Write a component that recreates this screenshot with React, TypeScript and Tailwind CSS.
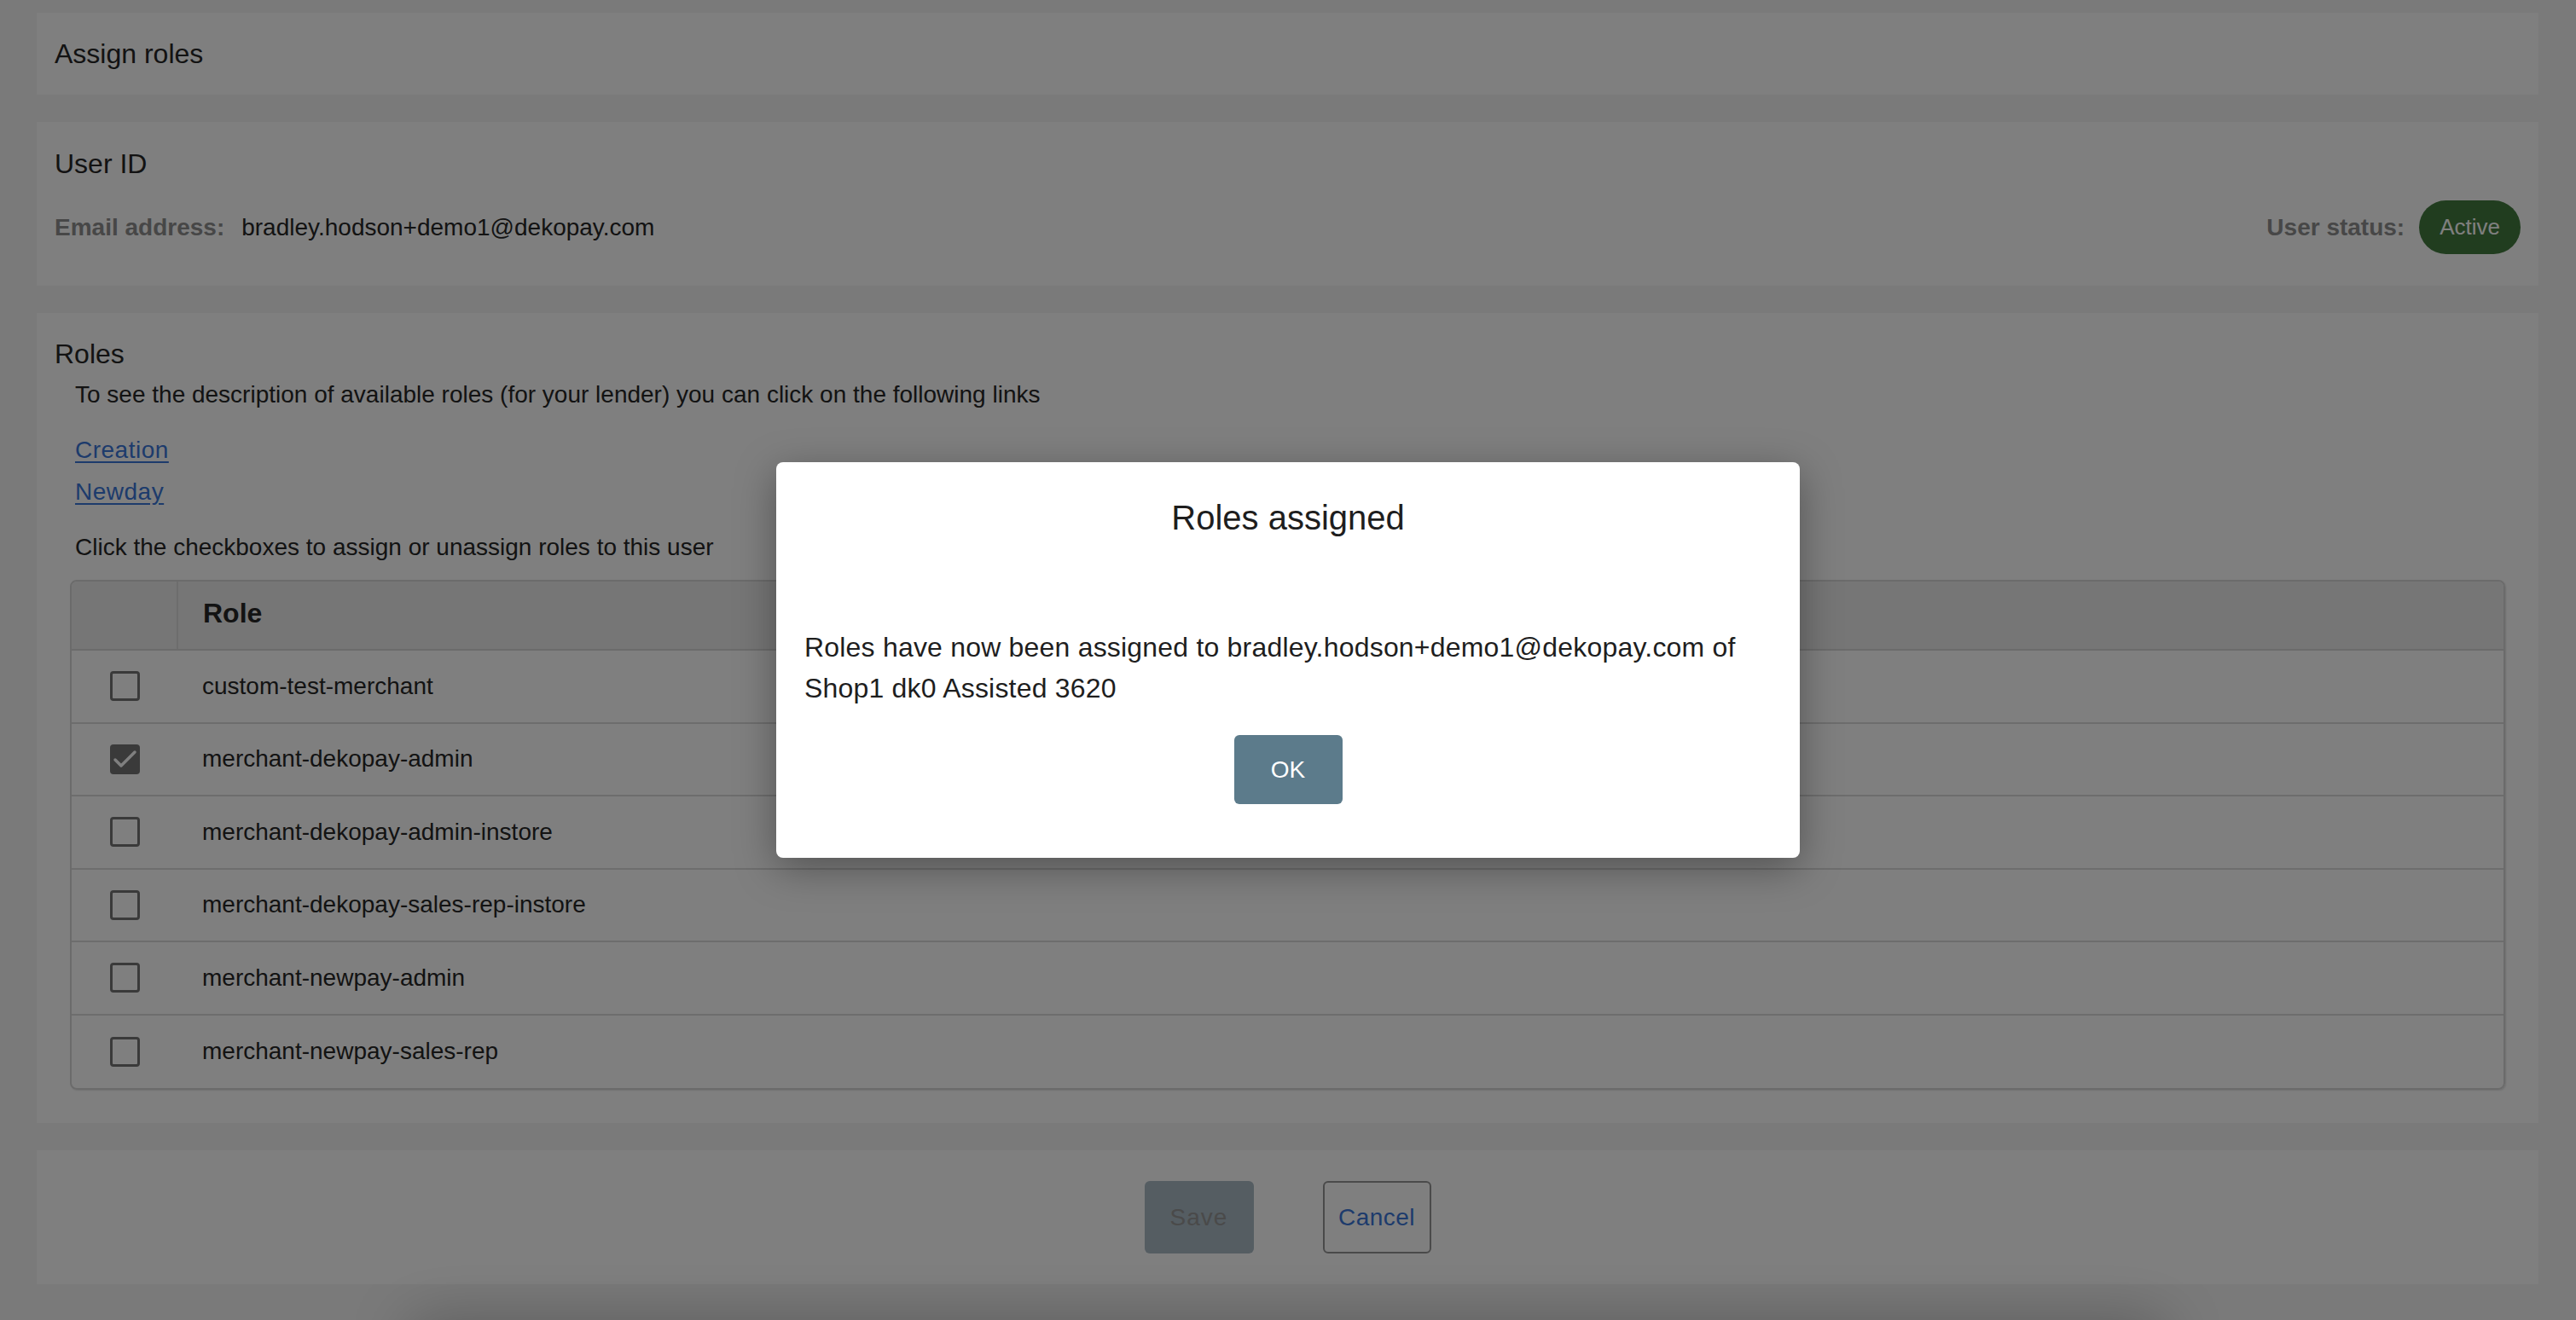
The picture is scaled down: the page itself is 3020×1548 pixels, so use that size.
import React from "react";

const roles = [
  { name: "custom-test-merchant", checked: false },
  { name: "merchant-dekopay-admin", checked: true },
  { name: "merchant-dekopay-admin-instore", checked: false },
  { name: "merchant-dekopay-sales-rep-instore", checked: false },
  { name: "merchant-newpay-admin", checked: false },
  { name: "merchant-newpay-sales-rep", checked: false },
];

function Checkbox({ checked }: { checked: boolean }) {
  if (checked) {
    return (
      <div className="w-[35px] h-[35px] rounded-[4px] bg-[#747474] flex items-center justify-center">
        <svg width="35" height="35" viewBox="0 0 35 35">
          <polyline points="6,18 13,25 29,9" fill="none" stroke="#ffffff" strokeWidth="3.5" strokeLinecap="round" strokeLinejoin="round" />
        </svg>
      </div>
    );
  }
  return <div className="w-[35px] h-[35px] rounded-[4px] border-[3px] border-[#747474] bg-white" />;
}

export default function App() {
  return (
    <div className="relative w-[3020px] h-[1548px] overflow-hidden bg-[#f4f4f4] font-['Liberation_Sans',Arial,sans-serif] text-[#262626]">
      <div className="flex flex-col gap-[32px] pt-[15px] pl-[43px] pr-[44px]">
        {/* Card 1 */}
        <div className="bg-white h-[96px] flex items-center px-[21px] text-[32px] leading-[38px]">
          Assign roles
        </div>

        {/* Card 2 */}
        <div className="bg-white pt-[30px] pb-[37px] px-[21px]">
          <div className="text-[32px] leading-[38px]">User ID</div>
          <div className="mt-[24px] flex items-center justify-between h-[63px]">
            <div className="flex items-center text-[28px]">
              <span className="font-bold text-[#8e8e8e]">Email address:</span>
              <span className="ml-[20px]">bradley.hodson+demo1@dekopay.com</span>
            </div>
            <div className="flex items-center">
              <span className="font-bold text-[28px] text-[#8e8e8e]">User status:</span>
              <span className="ml-[17px] h-[63px] px-[24px] rounded-full bg-[#437a3f] text-white text-[26px] flex items-center">
                Active
              </span>
            </div>
          </div>
        </div>

        {/* Card 3 */}
        <div className="bg-white pt-[29px] pb-[39px] px-[21px]">
          <div className="text-[32px] leading-[38px]">Roles</div>
          <div className="pl-[24px] text-[28px] leading-[40px]">
            <div className="mt-[9px]">
              To see the description of available roles (for your lender) you can click on the following links
            </div>
            <div className="mt-[25px]">
              <a className="text-[#3a76d8] underline underline-offset-[4px] tracking-[0.5px]">Creation</a>
            </div>
            <div className="mt-[9px]">
              <a className="text-[#3a76d8] underline underline-offset-[4px] tracking-[0.5px]">Newday</a>
            </div>
            <div className="mt-[25px]">Click the checkboxes to assign or unassign roles to this user</div>
          </div>
          <div className="mt-[18px] mx-[18px] border-2 border-[#d6d6d6] rounded-[8px] overflow-hidden shadow-[1px_1px_2px_rgba(0,0,0,0.12)]">
            <div className="h-[81px] flex bg-[#ececec] border-b-2 border-[#d6d6d6]">
              <div className="w-[125px] border-r-2 border-[#dadada]" />
              <div className="flex items-center pl-[29px] pb-[6px] text-[32px] font-bold">Role</div>
            </div>
            {roles.map((r, i) => (
              <div
                key={r.name}
                className={
                  i < roles.length - 1
                    ? "h-[85.5px] flex items-center border-b-2 border-[#dadada]"
                    : "h-[85.5px] flex items-center"
                }
              >
                <div className="w-[125px] flex justify-center">
                  <Checkbox checked={r.checked} />
                </div>
                <div className="pl-[28px] text-[28px]">{r.name}</div>
              </div>
            ))}
          </div>
        </div>

        {/* Card 4 */}
        <div className="bg-white pt-[36px] pb-[36px] flex justify-center gap-[81px]">
          <button className="w-[128px] h-[85px] rounded-[6px] bg-[#aabac4] text-[#949494] text-[28px] tracking-[1px]">
            Save
          </button>
          <button className="w-[127px] h-[85px] rounded-[6px] bg-white border-2 border-[#949494] text-[#3a76d8] text-[28px] tracking-[0.5px]">
            Cancel
          </button>
        </div>

        <div className="mt-[10px] mx-[440px] h-[200px] bg-white shadow-[0_0_70px_rgba(0,0,0,0.25)]" />
      </div>

      {/* Modal overlay */}
      <div className="absolute inset-0 bg-black/50 flex items-center justify-center">
        <div className="w-[1200px] h-[464px] bg-white rounded-[8px] shadow-[0_12px_48px_rgba(0,0,0,0.35)] px-[33px] pt-[41px] flex flex-col text-[#1e1e1e]">
          <div className="text-[40px] leading-[48px] text-center">Roles assigned</div>
          <div className="mt-[104px] text-[32px] leading-[48px] tracking-[0.2px]">
            Roles have now been assigned to bradley.hodson+demo1@dekopay.com of Shop1 dk0 Assisted 3620
          </div>
          <div className="mt-[31px] flex justify-center">
            <button className="w-[127px] h-[81px] rounded-[6px] bg-[#5c7b8b] text-white text-[28px]">OK</button>
          </div>
        </div>
      </div>
    </div>
  );
}
